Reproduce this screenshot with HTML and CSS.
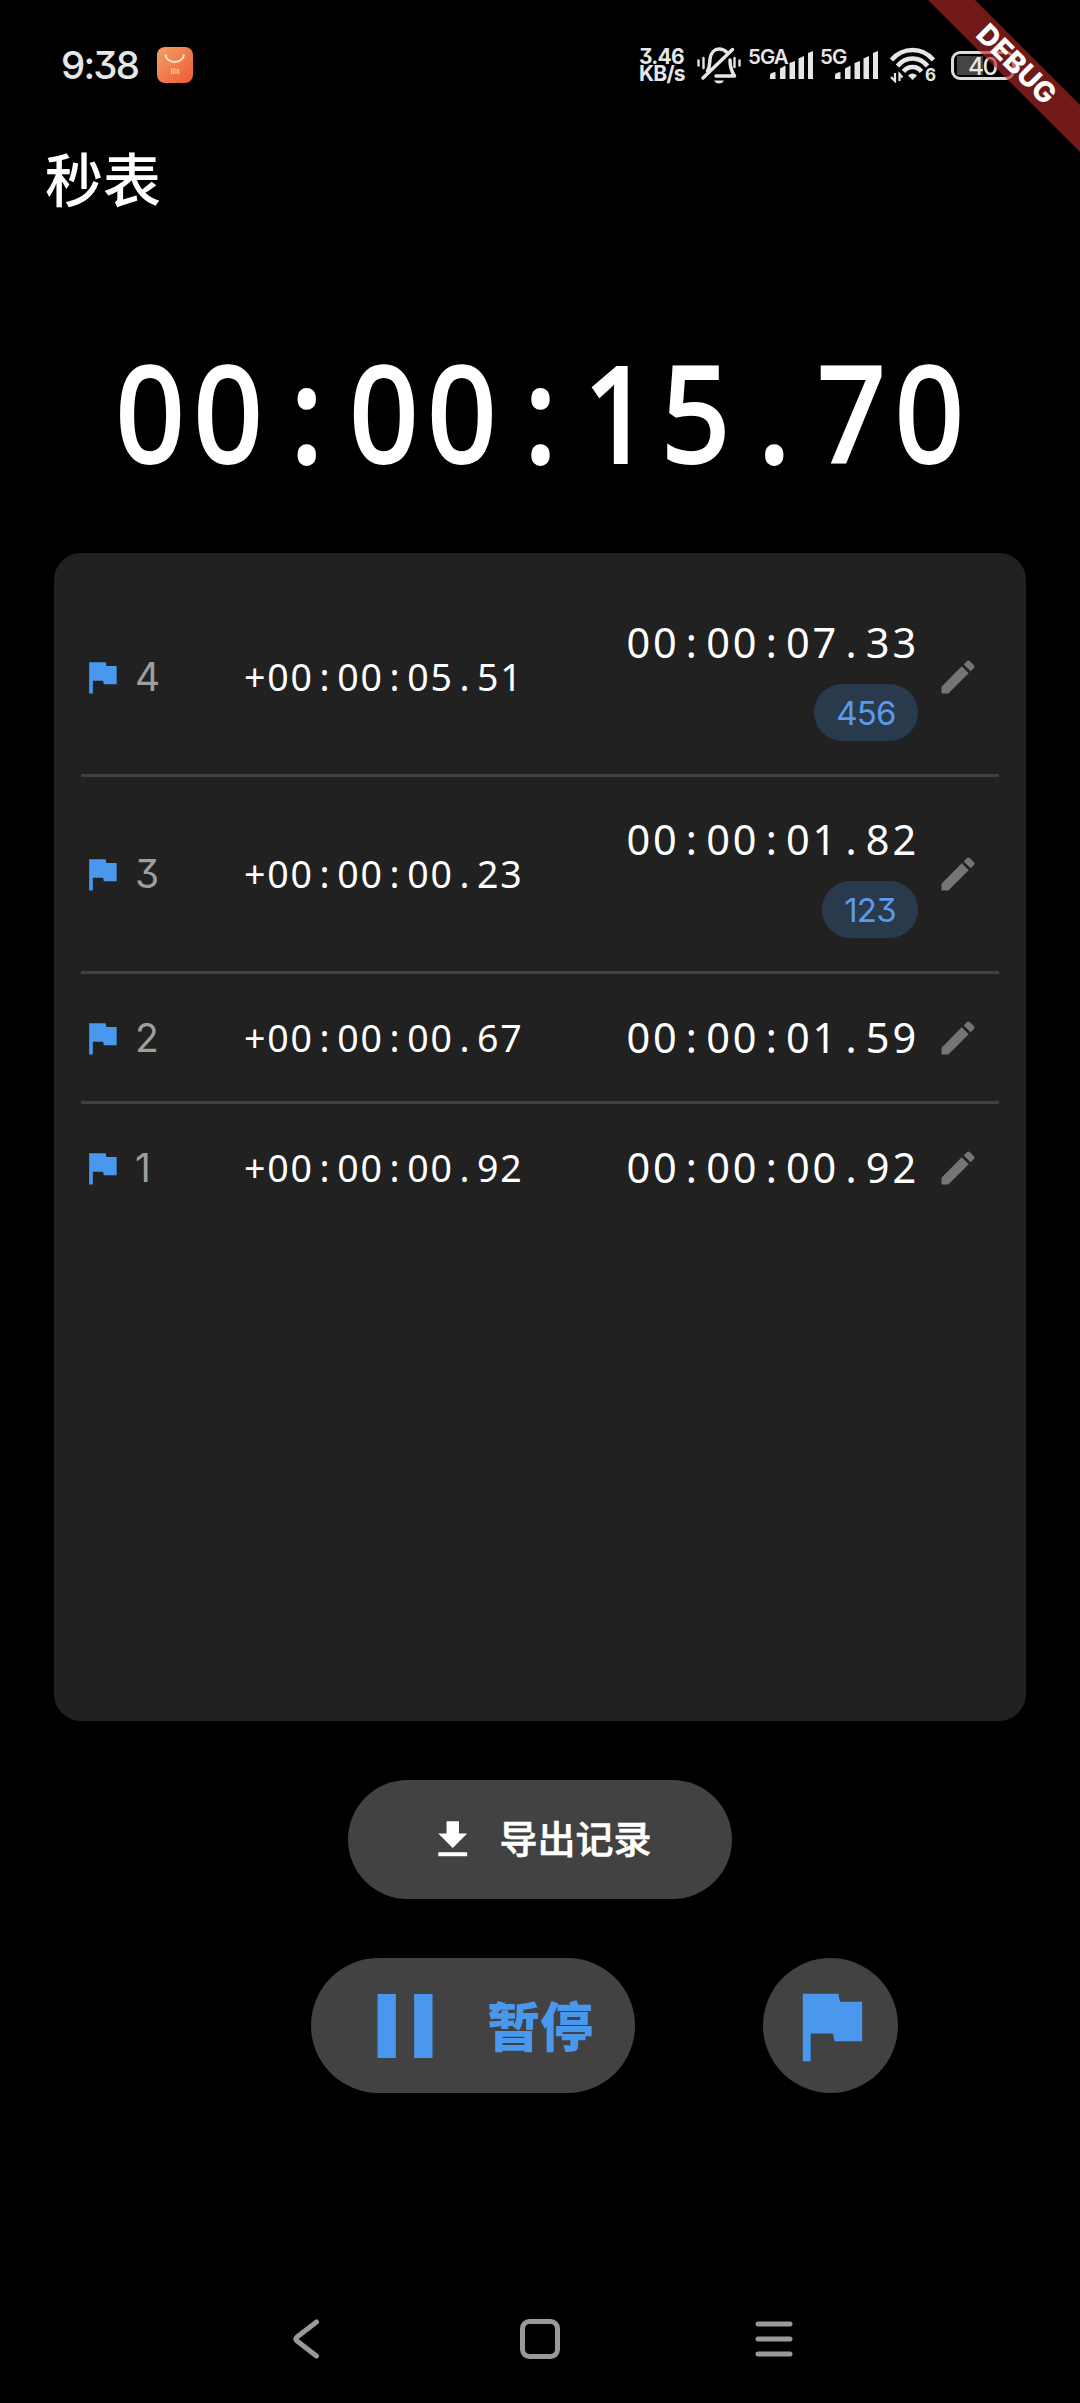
FILE: index.html
```html
<!DOCTYPE html>
<html lang="zh-CN">
<head>
<meta charset="utf-8">
<title>秒表</title>
<link rel="stylesheet" href="styles.css">
</head>
<body>
<svg width="0" height="0" class="defs">
  <symbol id="flag" viewBox="0 0 24 24"><path d="M14.4 6L14 4H5v17h2v-7h5.6l.4 2h7V6z"/></symbol>
  <symbol id="edit" viewBox="0 0 24 24"><path d="M3 17.25V21h3.75L17.81 9.94l-3.75-3.75L3 17.25zM20.71 7.04a1 1 0 0 0 0-1.41l-2.34-2.34a1 1 0 0 0-1.41 0l-1.83 1.83 3.75 3.75 1.83-1.83z"/></symbol>
  <symbol id="signal" viewBox="0 0 43 28"><path d="M0 28v-4q0-2 5.500-3v7zM10 28V17.500l5.500-3V28zM19.500 28V12l5.500-2v18zM28.500 28V7.500l5.500-2.500v23zM38 28V2l5-2v28z"/></symbol>
</svg>
<div class="screen">
  <header class="status">
    <span class="clock">9:38</span>
    <svg class="app" viewBox="0 0 36 36"><defs><linearGradient id="g" x1="0" y1="0" x2="1" y2="1"><stop offset="0" stop-color="#f3a066"/><stop offset="1" stop-color="#ee5a35"/></linearGradient></defs><rect width="36" height="36" rx="8" fill="url(#g)"/><path d="M8.500 7.500a9.200 7.500 0 0 0 18.400 0" fill="none" stroke="#ffe3bd" stroke-width="2"/><path d="M14.500 27v-5h3.500v5M16.300 23.500V27M20 22v5M21.700 22v5" fill="none" stroke="#ffc79d" stroke-width="1"/></svg>
    <div class="speed"><span>3.46</span><span>KB/s</span></div>
    <svg class="bell" viewBox="0 0 44 37" fill="none" stroke="#e6e6e6" stroke-width="3.500" stroke-linecap="round" stroke-linejoin="round"><path d="M10.500 24c2.500-4 2-7 2.500-12C14 5 18 2 22 2c3 0 5.500 1 7.500 3M33 13c0 6 .5 10 4.500 16H19M35.500 2.500L6 31"/><path d="M17 33.500h10q-1.500 3-5 3t-5-3z" fill="#e6e6e6" stroke="none"/><path d="M1.500 13.500v5M6.500 11v10M37.500 11v9M42.500 13.500v5" stroke-width="2.400"/></svg>
    <div class="net net-a"><span>5GA</span><svg><use href="#signal"/></svg></div>
    <div class="net net-b"><span>5G</span><svg><use href="#signal"/></svg></div>
    <div class="wifi"><svg viewBox="0 0 46 36" fill="none" stroke="#e6e6e6" stroke-width="4.600"><path d="M1.500 13Q10 3 22.500 3T43.500 13M7.500 19Q13.500 11.500 22.500 11.500T37.500 19M13.500 24.500Q17 20 22.500 20T31.500 24.500"/><path d="M18 28.500q4.500-4 9 0L22.500 33z" fill="#e6e6e6" stroke="none"/><path d="M5 26v8l-4-4M9.500 34v-7l3 3.500" stroke-width="2.200"/></svg><span>6</span></div>
    <div class="battery">40</div>
  </header>
  <h1 class="title">秒表</h1>
  <div class="timer">00<i>:</i>00<i>:</i>15<i>.</i>70</div>
  <main class="card">
    <section class="lap tall">
      <svg class="flag"><use href="#flag"/></svg><span class="num">4</span>
      <span class="delta"><i>+</i>00<i>:</i>00<i>:</i>05<i>.</i>51</span>
      <div class="total"><span class="time">00<i>:</i>00<i>:</i>07<i>.</i>33</span><span class="tag">456</span></div>
      <svg class="edit"><use href="#edit"/></svg>
    </section>
    <section class="lap tall">
      <svg class="flag"><use href="#flag"/></svg><span class="num">3</span>
      <span class="delta"><i>+</i>00<i>:</i>00<i>:</i>00<i>.</i>23</span>
      <div class="total"><span class="time">00<i>:</i>00<i>:</i>01<i>.</i>82</span><span class="tag narrow">123</span></div>
      <svg class="edit"><use href="#edit"/></svg>
    </section>
    <section class="lap">
      <svg class="flag"><use href="#flag"/></svg><span class="num">2</span>
      <span class="delta"><i>+</i>00<i>:</i>00<i>:</i>00<i>.</i>67</span>
      <div class="total"><span class="time">00<i>:</i>00<i>:</i>01<i>.</i>59</span></div>
      <svg class="edit"><use href="#edit"/></svg>
    </section>
    <section class="lap">
      <svg class="flag"><use href="#flag"/></svg><span class="num">1</span>
      <span class="delta"><i>+</i>00<i>:</i>00<i>:</i>00<i>.</i>92</span>
      <div class="total"><span class="time">00<i>:</i>00<i>:</i>00<i>.</i>92</span></div>
      <svg class="edit"><use href="#edit"/></svg>
    </section>
  </main>
  <button class="export"><svg viewBox="0 0 24 24"><path d="M19 9h-4V3H9v6H5l7 7 7-7zM5 18v2h14v-2H5z"/></svg><span>导出记录</span></button>
  <div class="controls">
    <button class="pause"><svg viewBox="0 0 24 24"><path d="M6 19h4V5H6v14zm8-14v14h4V5h-4z"/></svg><span>暂停</span></button>
    <button class="mark"><svg><use href="#flag"/></svg></button>
  </div>
  <nav class="nav">
    <svg viewBox="0 0 40 40"><path d="M29.500 3L10 18Q7.500 20 10 22L29.500 37"/></svg>
    <svg viewBox="0 0 40 40"><rect x="2.500" y="2.500" width="35" height="35" rx="7"/></svg>
    <svg viewBox="0 0 40 40"><path d="M5 5h32M5 20h32M5 35h32"/></svg>
  </nav>
  <svg class="ribbon" viewBox="0 0 152 152"><path d="M0 0h47l105 105v47z"/><text transform="translate(88.500 64) rotate(45)" text-anchor="middle" y="10">DEBUG</text></svg>
</div>
</body>
</html>
```
FILE: styles.css
```css
* { box-sizing: border-box; }
body { margin: 0; background: #000; }
.defs { display: block; position: absolute; }
.screen {
  position: relative;
  width: 1080px; height: 2403px;
  display: flex; flex-direction: column;
  overflow: hidden;
  background: #000; color: #fff;
  font-family: Inter, "Noto Sans CJK SC", sans-serif;
  font-feature-settings: "cv09";
}
i { font-style: normal; display: inline-block; text-align: center; letter-spacing: 0; }
button { border: 0; padding: 0; color: inherit; font: inherit; background: #424242; display: flex; align-items: center; }
svg { flex: none; display: block; }

.status { height: 130px; display: flex; align-items: center; padding-left: 61px; color: #e6e6e6; flex: none; }
.clock { width: 96px; font-size: 38.500px; font-weight: 500; letter-spacing: -1.8px; line-height: 40px; }
.app { width: 36px; height: 36px; }
.speed { margin-left: 446px; width: 58px; display: flex; flex-direction: column; font-size: 21px; line-height: 17px; font-weight: 700; letter-spacing: -0.8px; }
.bell { width: 44px; height: 37px; }
.net { position: relative; height: 30px; }
.net span { position: absolute; left: 0; top: -1px; font-size: 20.500px; line-height: 16px; font-weight: 600; letter-spacing: -1px; }
.net svg { width: 43px; height: 28px; margin-top: 1px; fill: #e6e6e6; }
.net-a { margin-left: 7px; width: 72px; padding-left: 22px; }
.net-b { width: 70px; padding-left: 15px; }
.wifi { position: relative; width: 61px; }
.wifi svg { width: 46px; height: 36px; }
.wifi span { position: absolute; left: 35px; bottom: -1px; font-size: 17px; line-height: 17px; font-weight: 700; }
.battery {
  width: 64px; height: 29px; border: 3px solid #dcdcdc; border-radius: 9px;
  background: linear-gradient(90deg, #444 26px, transparent 26px) 3px 2px / 55px 19px no-repeat;
  font-size: 24.500px; line-height: 24px; padding-left: 14px; letter-spacing: -1.5px; font-weight: 500;
}
.title { margin: 15px 0 0 45px; height: 72px; font-size: 58px; line-height: 72px; font-weight: 500; }
.timer {
  margin: 120px 0 0 116px; height: 148px;
  font-family: "Noto Sans", sans-serif; font-size: 131px; line-height: 148px;
  letter-spacing: 10.600px; white-space: nowrap; -webkit-text-stroke: 3.800px #fff;
  transform: scaleX(.911); transform-origin: 0 50%;
}
.timer i { width: 85.500px; padding-right: 9px; }

.card { margin: 68px 54px 0; height: 1168px; padding: 27px 27px 27px 26px; border-radius: 27px; background: #212121; flex: none; }
.lap { height: 130px; display: flex; align-items: center; border-bottom: 3px solid #404040; margin-left: 1px; }
.lap.tall { height: 197px; }
.lap:last-child { border-color: transparent; }
.flag { width: 44px; height: 44px; margin-left: -1px; fill: #4a97ee; }
.lap:not(.tall) > .total { margin-top: -1px; }
.num { width: 120px; padding-left: 11px; font-size: 39px; line-height: 44px; letter-spacing: -1px; color: #9e9e9e; }
.delta, .time { font-family: "Noto Sans", sans-serif; white-space: nowrap; }
.delta { width: 300px; font-size: 37.500px; line-height: 50px; letter-spacing: 1.860px; }
.delta i { width: 23.300px; padding-right: 2px; }
.total { width: 374px; display: flex; flex-direction: column; align-items: flex-end; }
.time { font-size: 41.500px; line-height: 56px; letter-spacing: 2.860px; margin-right: -1px; }
.time i { width: 26.600px; padding-right: 3px; }
.tag {
  width: 104px; height: 57px; margin-top: 14px; border-radius: 29px;
  background: #293a4c; color: #5a9ae8; font-size: 33px; line-height: 58px; text-align: center; letter-spacing: -0.8px;
}
.tall .total { padding-top: 1px; }
.tag.narrow { width: 96px; }
.edit { width: 44px; height: 44px; margin-left: 18px; fill: #757575; }

.export { align-self: center; margin-top: 59px; width: 384px; height: 119px; border-radius: 60px; padding-left: 80px; flex: none; }
.export svg { width: 49.500px; height: 49.500px; fill: #fff; }
.export span { margin: -5px 0 0 22px; font-size: 38px; font-weight: 500; font-family: "Noto Sans CJK SC", sans-serif; line-height: 50px; -webkit-text-stroke: .6px #fff; }
.controls { display: flex; gap: 128px; margin: 59px 0 0 311px; }
.controls button { height: 135px; border-radius: 68px; }
.pause { width: 324px; padding-left: 39px; color: #4a97ee; }
.pause svg { width: 110px; height: 110px; fill: #4a97ee; }
.pause span { margin: -4px 0 0 27px; font-size: 53px; font-weight: 900; line-height: 70px; font-family: "Noto Sans CJK SC", sans-serif; }
.mark { width: 135px; justify-content: center; }
.mark svg { width: 95px; height: 95px; fill: #4a97ee; }
.nav { margin: 226px 0 0 287px; display: flex; gap: 193px; }
.nav svg { width: 40px; height: 40px; fill: none; stroke: #999; stroke-width: 5; stroke-linecap: round; }
.ribbon { position: absolute; right: 0; top: 0; width: 152px; height: 152px; fill: rgba(178, 40, 38, .63); }
.ribbon text { font: 800 28.500px Inter, sans-serif; fill: #fff; }
```
